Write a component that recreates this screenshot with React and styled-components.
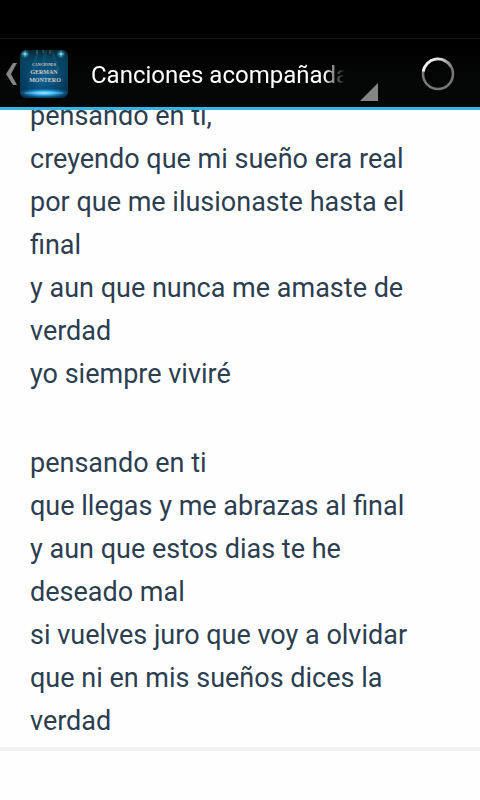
import React from "react";
import styled, { createGlobalStyle } from "styled-components";

const verses = [
  [
    "pensando en ti,",
    "creyendo que mi sueño era real",
    "por que me ilusionaste hasta el final",
    "y aun que nunca me amaste de verdad",
    "yo siempre viviré",
  ],
  [
    "pensando en ti",
    "que llegas y me abrazas al final",
    "y aun que estos dias te he deseado mal",
    "si vuelves juro que voy a olvidar",
    "que ni en mis sueños dices la verdad",
  ],
];

const AppIcon = () => (
  <svg width="48" height="48" viewBox="0 0 48 48" aria-hidden="true">
    <defs>
      <radialGradient id="stage" cx="50%" cy="58%" r="65%">
        <stop offset="0" stopColor="#08669c" />
        <stop offset="0.55" stopColor="#06456c" />
        <stop offset="1" stopColor="#052b45" />
      </radialGradient>
      <linearGradient id="beams" x1="0" y1="0" x2="0" y2="1">
        <stop offset="0" stopColor="#062432" />
        <stop offset="0.4" stopColor="#0b5370" stopOpacity="0.4" />
        <stop offset="1" stopColor="#0b5370" stopOpacity="0" />
      </linearGradient>
      <radialGradient id="floor">
        <stop offset="0" stopColor="#9be4ff" />
        <stop offset="0.4" stopColor="#35aef0" />
        <stop offset="1" stopColor="#0a68a8" stopOpacity="0" />
      </radialGradient>
      <radialGradient id="lamp">
        <stop offset="0" stopColor="#d5fbff" />
        <stop offset="0.35" stopColor="#3ea5bd" stopOpacity="0.7" />
        <stop offset="1" stopColor="#1b6f8c" stopOpacity="0" />
      </radialGradient>
      <clipPath id="iconShape">
        <rect width="48" height="48" rx="6" />
      </clipPath>
    </defs>
    <g clipPath="url(#iconShape)">
      <rect width="48" height="48" fill="url(#stage)" />
      <rect width="48" height="30" fill="url(#beams)" />
      <path d="M17 0l-6 22h4l4-22zM24 0l-2 14h4l1-14zM31 0l5 20h4L33 0z" fill="#3493aa" opacity="0.15" />
      <circle cx="5" cy="4" r="5" fill="url(#lamp)" />
      <circle cx="41" cy="4" r="5" fill="url(#lamp)" />
      <path d="M5 1v6M2 4h6M41 1v6M38 4h6" stroke="#8bdcec" strokeWidth="0.6" opacity="0.7" />
      <path d="M17 0v4M23 0v3M30 0v4" stroke="#9a8f78" opacity="0.6" />
      <ellipse cx="24" cy="43" rx="27" ry="5" fill="url(#floor)" />
      <path d="M5 43h38" stroke="#b4edff" opacity="0.4" />
      <g fontFamily="Liberation Serif, serif" fontWeight="700" textAnchor="middle" fill="#d8cabf">
        <text x="24" y="16" fontSize="4">CANCIONES</text>
        <text x="24" y="24" fontSize="6">GERMAN</text>
        <text x="25" y="32" fontSize="6">MONTERO</text>
      </g>
    </g>
  </svg>
);

const App = () => {
  return (
    <>
      <GlobalStyle />
      <Screen>
        <StatusBar />
        <ActionBar>
          <HomeButton type="button" aria-label="Atrás">
            <svg width="12" height="22" viewBox="0 0 12 22">
              <path d="M7 0h4L5 11l6 11H7L0 11z" fill="#858585" />
            </svg>
            <AppIcon />
          </HomeButton>
          <Picker>
            <PickerSelect aria-label="Sección">
              <option>Canciones acompañadas</option>
            </PickerSelect>
            <PickerCorner viewBox="0 0 18 18">
              <path d="M18 0v18H0z" fill="#858585" />
            </PickerCorner>
          </Picker>
          <Spinner viewBox="0 0 34 34" role="progressbar" aria-label="Cargando">
            <defs>
              <linearGradient id="sweep" x1="0" y1="0" x2="1" y2="0">
                <stop offset="0" stopColor="#f4f4f4" />
                <stop offset="0.6" stopColor="#dedede" />
                <stop offset="1" stopColor="#808080" />
              </linearGradient>
            </defs>
            <circle cx="17" cy="17" r="15" fill="none" stroke="#777" strokeWidth="2.6" />
            <path d="M2.2 14.5A15 15 0 0 1 30 9.5" fill="none" stroke="url(#sweep)" strokeWidth="2.8" />
          </Spinner>
        </ActionBar>
        <Lyrics>
          {verses.map((verse, i) => (
            <Verse key={i}>
              {verse.map((line) => (
                <Line key={line}>{line}</Line>
              ))}
            </Verse>
          ))}
        </Lyrics>
        <Footer />
      </Screen>
    </>
  );
};
export default App;

const GlobalStyle = createGlobalStyle`
	* {
		box-sizing: border-box;
	}
	body {
		margin: 0;
		background: #fefefe;
		font-family: Roboto, sans-serif;
	}
`;

const Screen = styled.div`
	display: flex;
	flex-direction: column;
	height: 100vh;
`;

const StatusBar = styled.div`
	flex: none;
	height: 38px;
	background: #000;
`;

const ActionBar = styled.header`
	flex: none;
	display: flex;
	align-items: center;
	height: 72px;
	padding: 2px 25px 0 6px;
	background: linear-gradient(#000, #060807);
	border-top: 1px solid #151515;
	border-bottom: 3px solid #33b5e5;
`;

const HomeButton = styled.button`
	display: flex;
	align-items: center;
	gap: 2px;
	padding: 0;
	border: 0;
	background: none;
`;

const Picker = styled.div`
	flex: 1;
	min-width: 0;
	display: flex;
	align-items: center;
	gap: 12px;
	height: 54px;
	margin: 0 43px 0 23px;
`;

const PickerSelect = styled.select`
	flex: 1;
	min-width: 0;
	appearance: none;
	padding: 2px 0 0;
	border: 0;
	outline: 0;
	background: none;
	color: #fff;
	font-family: inherit;
	font-size: 24px;
	line-height: 32px;
	mask-image: linear-gradient(to left, transparent 3px, #000 24px);
`;

const PickerCorner = styled.svg`
	flex: none;
	align-self: flex-end;
	width: 18px;
	height: 18px;
	pointer-events: none;
`;

const Spinner = styled.svg`
	flex: none;
	width: 34px;
	height: 34px;
`;

/* scrolled to the end, so the first line slides under the bar */
const Lyrics = styled.main`
	flex: 1;
	min-height: 0;
	display: flex;
	flex-direction: column;
	justify-content: flex-end;
	gap: 46px;
	overflow: hidden;
	padding: 0 30px 4px;
	color: #2c3e50;
`;

const Verse = styled.section`
	flex: none;
`;

const Line = styled.p`
	margin: 0;
	font-size: 27px;
	line-height: 43px;
`;

const Footer = styled.footer`
	flex: none;
	height: 53px;
	border-top: 4px solid #f2f2f2;
`;
